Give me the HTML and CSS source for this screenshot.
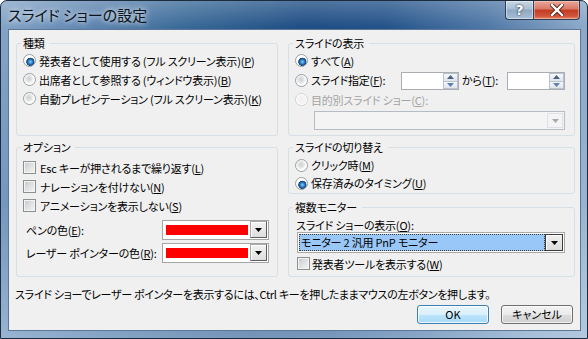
FILE: index.html
```html
<!DOCTYPE html>
<html lang="ja">
<head>
<meta charset="utf-8">
<title>スライド ショーの設定</title>
<link rel="stylesheet" href="styles.css">
</head>
<body>
<div class="window">
  <div class="titlebar">
    <div class="title">スライド ショーの設定</div>
    <div class="caption-buttons">
      <div class="cap-btn help">?</div>
      <div class="cap-btn close">
        <svg width="14" height="12" viewBox="0 0 14 12"><path d="M2 1 L12 11 M12 1 L2 11" stroke="#5a2218" stroke-width="4.2" stroke-linecap="square"/><path d="M2 1 L12 11 M12 1 L2 11" stroke="#fff" stroke-width="2.4" stroke-linecap="square"/></svg>
      </div>
    </div>
  </div>
  <div class="client">
    <div class="groups">
      <fieldset class="box box-type">
        <legend>種類</legend>
        <div class="opt"><span class="radio checked"></span><span>発表者として使用する (フル スクリーン表示)(<u>P</u>)</span></div>
        <div class="opt"><span class="radio"></span><span>出席者として参照する (ウィンドウ表示)(<u>B</u>)</span></div>
        <div class="opt"><span class="radio"></span><span>自動プレゼンテーション (フル スクリーン表示)(<u>K</u>)</span></div>
      </fieldset>

      <fieldset class="box box-show">
        <legend>スライドの表示</legend>
        <div class="opt"><span class="radio checked"></span><span>すべて(<u>A</u>)</span></div>
        <div class="opt opt-range">
          <span class="radio"></span><span class="range-label">スライド指定(<u>F</u>):</span>
          <div class="spin"><div class="spin-field"></div><div class="spin-btns"><span class="spin-b"><svg width="7" height="4" viewBox="0 0 7 4"><path d="M0 4 L3.5 0 L7 4Z" fill="#4b5f7e"/></svg></span><span class="spin-b"><svg width="7" height="4" viewBox="0 0 7 4"><path d="M0 0 L3.5 4 L7 0Z" fill="#5b7fb5"/></svg></span></div></div>
          <span class="to-label">から(<u>T</u>):</span>
          <div class="spin"><div class="spin-field"></div><div class="spin-btns"><span class="spin-b"><svg width="7" height="4" viewBox="0 0 7 4"><path d="M0 4 L3.5 0 L7 4Z" fill="#4b5f7e"/></svg></span><span class="spin-b"><svg width="7" height="4" viewBox="0 0 7 4"><path d="M0 0 L3.5 4 L7 0Z" fill="#5b7fb5"/></svg></span></div></div>
        </div>
        <div class="opt disabled"><span class="radio"></span><span>目的別スライド ショー(<u>C</u>):</span></div>
        <div class="combo-disabled"><span class="dd-disabled"><svg width="7" height="4" viewBox="0 0 7 4"><path d="M0 0 L3.5 4 L7 0Z" fill="#a8a8a8"/></svg></span></div>
      </fieldset>

      <fieldset class="box box-options">
        <legend>オプション</legend>
        <div class="opt"><span class="check"></span><span>Esc キーが押されるまで繰り返す(<u>L</u>)</span></div>
        <div class="opt"><span class="check"></span><span>ナレーションを付けない(<u>N</u>)</span></div>
        <div class="opt"><span class="check"></span><span>アニメーションを表示しない(<u>S</u>)</span></div>
        <div class="color-row">
          <span class="color-label">ペンの色(<u>E</u>):</span>
          <div class="picker"><span class="swatch"></span><span class="dd-btn"><svg width="7" height="4" viewBox="0 0 7 4"><path d="M0 0 L3.5 4 L7 0Z" fill="#000"/></svg></span></div>
        </div>
        <div class="color-row second">
          <span class="color-label">レーザー ポインターの色(<u>R</u>):</span>
          <div class="picker"><span class="swatch"></span><span class="dd-btn"><svg width="7" height="4" viewBox="0 0 7 4"><path d="M0 0 L3.5 4 L7 0Z" fill="#000"/></svg></span></div>
        </div>
      </fieldset>

      <div class="col-right">
        <fieldset class="box box-advance">
          <legend>スライドの切り替え</legend>
          <div class="opt opt-short"><span class="radio"></span><span>クリック時(<u>M</u>)</span></div>
          <div class="opt opt-short"><span class="radio checked"></span><span>保存済みのタイミング(<u>U</u>)</span></div>
        </fieldset>
        <fieldset class="box box-monitor">
          <legend>複数モニター</legend>
          <div class="mon-label">スライド ショーの表示(<u>O</u>):</div>
          <div class="combo">
            <span class="combo-sel">モニター 2 汎用 PnP モニター</span>
            <span class="dd-btn dark"><svg width="7" height="4" viewBox="0 0 7 4"><path d="M0 0 L3.5 4 L7 0Z" fill="#000"/></svg></span>
          </div>
          <div class="opt opt-mon"><span class="check"></span><span>発表者ツールを表示する(<u>W</u>)</span></div>
        </fieldset>
      </div>
    </div>
    <p class="hint">スライド ショーでレーザー ポインターを表示するには、Ctrl キーを押したままマウスの左ボタンを押します。</p>
    <div class="buttons">
      <button class="btn default">OK</button>
      <button class="btn">キャンセル</button>
    </div>
  </div>
</div>
</body>
</html>
```
FILE: styles.css
```css
* { box-sizing: border-box; }
html, body { margin: 0; padding: 0; }
body {
  width: 588px;
  height: 339px;
  overflow: hidden;
  background: #fff;
  font-family: "Noto Sans CJK JP", "Liberation Sans", sans-serif;
  font-size: 11px;
  font-weight: 400;
  letter-spacing: -0.2px;
  font-feature-settings: "palt";
  color: #000;
}
u { text-decoration: underline; text-underline-offset: 1px; }

.window {
  width: 588px;
  height: 339px;
  display: flex;
  flex-direction: column;
  padding: 0 6px 7px 7px;
  border: 1px solid #1d2c3c;
  border-radius: 7px 7px 0 0;
  background:
    linear-gradient(180deg, rgba(255,255,255,0.22) 0, rgba(255,255,255,0) 26px),
    linear-gradient(180deg, rgba(255,255,255,0) 60%, rgba(190,210,230,0.55) 100%),
    linear-gradient(100deg, #86a5c8 0%, #5f86b1 14%, #386896 30%, #1f4d84 48%, #24538a 60%, #4f78a6 76%, #88a6c7 90%, #a6bdd6 100%);
}

.titlebar {
  height: 28px;
  display: flex;
  justify-content: space-between;
  align-items: flex-start;
}
.title {
  padding-top: 4px;
  font-size: 15px;
  letter-spacing: 0;
  line-height: 20px;
  color: #0b1420;
  text-shadow: 0 0 5px rgba(255,255,255,0.85), 0 0 10px rgba(255,255,255,0.55);
}
.caption-buttons {
  display: flex;
  margin-right: 1px;
}
.cap-btn {
  height: 19px;
  display: flex;
  align-items: center;
  justify-content: center;
  border: 1px solid #2e3f55;
  border-top: none;
}
.help {
  width: 28px;
  border-right: none;
  border-radius: 0 0 0 4px;
  background: linear-gradient(180deg, #c9d6e4 0%, #aabed3 45%, #8ea8c3 50%, #a9bfd6 100%);
  box-shadow: inset 0 0 0 1px rgba(255,255,255,0.45);
  color: #fff;
  font-family: "DejaVu Sans", sans-serif;
  font-weight: bold;
  font-size: 14px;
  text-shadow: 0 0 2px #243447, 0 0 1px #243447;
}
.close {
  width: 47px;
  border-radius: 0 0 4px 0;
  background: linear-gradient(180deg, #e9a99b 0%, #d87764 45%, #c23b22 50%, #d2563c 85%, #e58a6e 100%);
  box-shadow: inset 0 0 0 1px rgba(255,220,210,0.45);
}

.client {
  flex: 1;
  background: #f0f0f0;
  border: 1px solid #5c7896;
  display: flex;
  flex-direction: column;
}

.groups {
  display: grid;
  grid-template-columns: 262px 287px;
  grid-template-rows: 100px 137px;
  column-gap: 10px;
  row-gap: 4px;
  padding: 6px 0 0 7px;
}

.box {
  margin: 0;
  min-width: 0;
  border: 1px solid #d5dfe5;
  border-radius: 3px;
  padding: 0 4px;
}
.box legend {
  padding: 0 5px 0 2px;
  line-height: 14px;
  font-size: 11px;
}
.box-type, .box-show { height: 100px; padding-top: 1px; }
.box-options { height: 137px; padding-top: 4px; }

.opt {
  display: flex;
  align-items: center;
  height: 19px;
  padding-left: 2px;
  white-space: nowrap;
  line-height: 14px;
}
.opt.disabled { color: #a3a3a3; }

.radio {
  flex: none;
  width: 13px;
  height: 13px;
  margin-right: 3px;
  border-radius: 50%;
  border: 1px solid #9a9fa4;
  background: radial-gradient(circle at 45% 42%, #d2d2d2 0, #dcdcdc 2px, #eaeaea 3.5px, #f8f8f8 4.5px, #fff 5px);
}
.radio.checked {
  background: radial-gradient(circle at 58% 62%, #8fd3fb 0, #3f93d8 1.6px, #1d5fa3 3px, #153f72 3.8px, #f6f6f6 4.4px, #fff 5px);
}
.opt.disabled .radio {
  border-color: #cfd2d5;
  background: radial-gradient(circle, #f0f0f0 0, #f4f4f4 4px, #fff 5px);
}

.check {
  flex: none;
  width: 13px;
  height: 13px;
  margin-right: 4px;
  border: 1px solid #8e8f8f;
  background: linear-gradient(135deg, #c4c7cb 0%, #e2e3e4 55%, #f5f5f5 100%);
  box-shadow: inset 0 0 0 1px #f4f4f4;
}

/* slide range */
.opt-range {
  height: 20px;
  align-items: flex-start;
  padding-top: 2px;
}
.opt-range .radio { margin-top: 2px; }
.range-label { width: 90px; padding-top: 1px; }
.to-label { width: 45px; margin-left: 3px; padding-top: 1px; }
.spin {
  flex: none;
  display: flex;
  width: 58px;
  height: 18px;
  border: 1px solid #abadb3;
  background: #fff;
}
.spin-field { flex: 1; }
.spin-btns {
  width: 15px;
  display: flex;
  flex-direction: column;
}
.spin-b {
  flex: 1;
  display: flex;
  align-items: center;
  justify-content: center;
  border: 1px solid #b9c3cf;
  background: linear-gradient(180deg, #f6f8fa, #dfe5ec);
}
.spin-b + .spin-b { border-top: none; }

.combo-disabled {
  margin: 2px 0 0 21px;
  width: 251px;
  height: 19px;
  border: 1px solid #b5bcc6;
  background: #f4f4f4;
  display: flex;
  justify-content: flex-end;
  padding: 1px;
}
.dd-disabled {
  width: 16px;
  display: flex;
  align-items: center;
  justify-content: center;
  border: 1px solid #dde2e8;
}

/* color pickers */
.color-row {
  display: flex;
  align-items: center;
  height: 20px;
  margin-top: 5px;
  padding: 0 4px 0 5px;
  white-space: nowrap;
}
.color-row.second { margin-top: 3px; }
.color-label { flex: 1; }
.picker {
  width: 107px;
  height: 20px;
  border: 1px solid #a5a5a5;
  background: #fff;
  display: flex;
  align-items: flex-start;
  padding: 0 1px 0 3px;
}
.swatch {
  width: 82px;
  height: 10px;
  margin-top: 4px;
  background: #ff0000;
}
.dd-btn {
  margin-left: 2px;
  width: 17px;
  height: 17px;
  display: flex;
  align-items: flex-end;
  justify-content: center;
  padding-bottom: 5px;
  border: 1px solid;
  border-color: #a8a8a8 #5e5e5e #5e5e5e #a8a8a8;
  background: linear-gradient(180deg, #f2f2f2, #dedede);
  box-shadow: inset 1px 1px 0 #fff;
}

/* right column row 2 */
.col-right {
  display: flex;
  flex-direction: column;
  gap: 6px;
}
.box-advance { height: 54px; padding-top: 2px; }
.opt-short { height: 18px; }
.box-monitor { height: 77px; padding-top: 4px; }
.mon-label {
  line-height: 14px;
  padding-left: 3px;
  white-space: nowrap;
}
.combo {
  margin-left: 4px;
  width: 268px;
  height: 21px;
  border: 1px solid #a9a9a9;
  background: #fff;
  display: flex;
  padding: 1px;
}
.combo-sel {
  flex: 1;
  height: 17px;
  line-height: 15px;
  padding-left: 1px;
  background: #99c8f8;
  border: 1px dotted #3a3a3a;
  white-space: nowrap;
}
.dd-btn.dark {
  margin-left: 0;
  width: 18px;
  border-color: #3c3c3c;
  background: linear-gradient(180deg, #efefef, #dcdcdc);
}
.opt-mon {
  height: 21px;
  padding-left: 4px;
}
.opt-mon .check { margin-right: 2px; }

/* footer */
.hint {
  margin: 10px 0 0 6px;
  line-height: 14px;
  white-space: nowrap;
  letter-spacing: -0.3px;
}
.buttons {
  display: flex;
  justify-content: flex-end;
  gap: 12px;
  margin-top: 4px;
  padding-right: 7px;
}
.btn {
  width: 72px;
  height: 19px;
  padding: 0;
  font-family: inherit;
  font-size: 11px;
  font-weight: 400;
  letter-spacing: 0;
  font-feature-settings: "palt";
  line-height: 15px;
  color: #000;
  border: 1px solid #707070;
  border-radius: 3px;
  background: linear-gradient(180deg, #f2f2f2 0%, #ebebeb 50%, #dddddd 50%, #cfcfcf 100%);
  box-shadow: inset 0 0 0 1px rgba(255,255,255,0.7);
}
.btn.default {
  border-color: #3c7fb1;
  background: linear-gradient(180deg, #eaf6fd 0%, #d9f0fc 50%, #bee6fd 50%, #a7d9f5 100%);
  box-shadow: inset 0 0 0 1px rgba(255,255,255,0.8);
}
```
